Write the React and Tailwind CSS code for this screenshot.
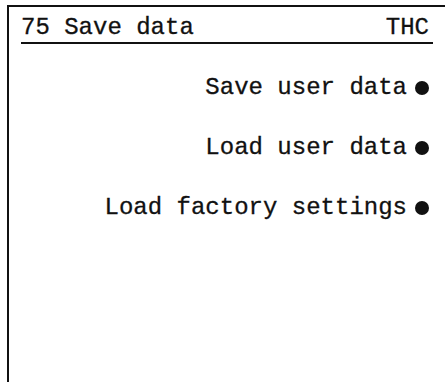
export default function App() {
  const items = ['Save user data', 'Load user data', 'Load factory settings'];

  return (
    <div className="w-[445px] h-[382px] overflow-hidden bg-white text-[#111]" style={{ fontFamily: '"Liberation Mono", "DejaVu Sans Mono", monospace' }}>
      <div className="ml-[7px] mt-[5px] w-[460px] h-[400px] border-l-2 border-t-2 border-[#111]">
        <div className="ml-[12px] w-[412px] [-webkit-text-stroke:0.3px_#111]">
          <div className="flex justify-between pt-[7px] pr-[4px] border-b-2 border-[#111] text-[24px] leading-[28px]">
            <span>75 Save data</span>
            <span>THC</span>
          </div>

          <div className="mt-[30px] flex flex-col gap-[32px] pr-[4px]">
            {items.map((label) => (
              <div key={label} className="flex justify-end items-start gap-[8px] text-[24px] leading-[28px]">
                <span>{label}</span>
                <span className="mt-[7px] w-[14px] h-[14px] rounded-full bg-[#111]" />
              </div>
            ))}
          </div>
        </div>
      </div>
    </div>
  );
}
